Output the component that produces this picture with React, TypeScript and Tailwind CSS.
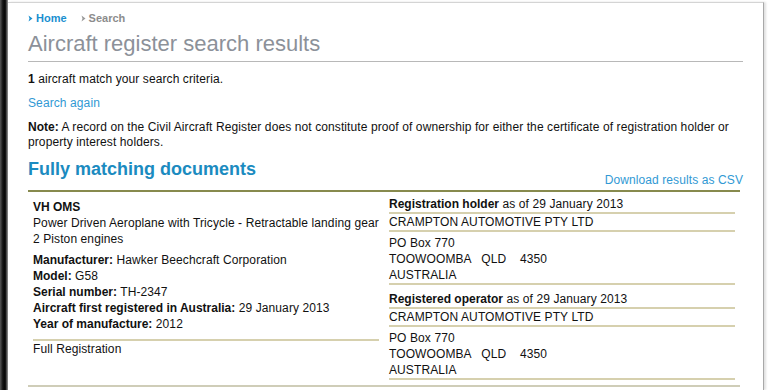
import React from 'react';

const Chevron: React.FC<{ color: string }> = ({ color }) => (
  <svg width="5" height="7" viewBox="0 0 5 7" className="inline-block mr-[3px] mb-[1px]">
    <path d="M0.5 0.5 L4.5 3.5 L0.5 6.5 L1.5 3.5 Z" fill={color} />
  </svg>
);

const B: React.FC<{ children: React.ReactNode }> = ({ children }) => (
  <span className="font-bold tracking-normal">{children}</span>
);

const AddressBlock: React.FC<{ label: string; first?: boolean }> = ({ label, first }) => (
  <div className={first ? '' : 'mt-[6px]'}>
    <div className="leading-[16px]">
      <B>{label}</B> <span>as of 29 January 2013</span>
    </div>
    <div className="h-[2px] bg-[#d6d0ae]"></div>
    <div className="leading-[16px]">CRAMPTON AUTOMOTIVE PTY LTD</div>
    <div className="h-[2px] bg-[#d6d0ae]"></div>
    <div className="pt-[3px] leading-[16px]">
      <div>PO Box 770</div>
      <div className="whitespace-pre">TOOWOOMBA   QLD    4350</div>
      <div>AUSTRALIA</div>
    </div>
    <div className="h-[2px] bg-[#d6d0ae]"></div>
  </div>
);

const App: React.FC = () => {
  const details = [
    { label: 'Manufacturer:', value: 'Hawker Beechcraft Corporation' },
    { label: 'Model:', value: 'G58' },
    { label: 'Serial number:', value: 'TH-2347' },
    { label: 'Aircraft first registered in Australia:', value: '29 January 2013' },
    { label: 'Year of manufacture:', value: '2012' },
  ];

  return (
    <div className="w-[768px] h-[390px] overflow-hidden bg-white flex text-[12px] tracking-[0.1px] text-[#111] font-['Liberation_Sans',Arial,sans-serif]">
      {/* dark edge on the left */}
      <div className="w-[8px] h-full bg-[linear-gradient(to_right,#5a5a5a,#161616_35%,#050505_65%,#9a9a9a)]"></div>

      <div className="w-[756px] mt-[2px] border-t border-r border-[#d4d4d4] border-r-[#a8a8a8] shadow-[2px_0_2px_rgba(0,0,0,0.12)] pl-[20px] pt-[8px]">
        {/* breadcrumb */}
        <div className="flex items-center gap-[14px] text-[11px] font-bold leading-[14px] tracking-normal">
          <span className="text-[#1a8fd0]"><Chevron color="#1a8fd0" />Home</span>
          <span className="text-[#8c8c8c]"><Chevron color="#9a9a9a" />Search</span>
        </div>

        <div className="w-[715px]">
          <h1 className="mt-[6px] text-[22px] leading-[26px] tracking-normal text-[#8c9199] pb-[4px] border-b border-[#b8b8b8]">
            Aircraft register search results
          </h1>

          <p className="mt-[10px] leading-[15px]">
            <B>1</B> <span>aircraft match your search criteria.</span>
          </p>
          <p className="mt-[9px] leading-[15px] text-[#3199d4]">Search again</p>
          <p className="mt-[9px] leading-[15px]">
            <B>Note:</B> <span>A record on the Civil Aircraft Register does not constitute proof of ownership for either the certificate of registration holder or property interest holders.</span>
          </p>

          <div className="flex items-end justify-between mt-[8px]">
            <h2 className="text-[18px] font-bold leading-[22px] tracking-normal pb-[10px] text-[#1b8bc0]">Fully matching documents</h2>
            <span className="leading-[15px] pb-[2px] text-[#3199d4]">Download results as CSV</span>
          </div>

          <div className="w-[712px] border-t-2 border-[#878a4e] border-b-2 border-b-[#cfcdb8] flex">
            {/* left cell */}
            <div className="w-[356px] px-[5px] pt-[7px] leading-[16px]">
              <div className="font-bold tracking-normal">VH OMS</div>
              <div>Power Driven Aeroplane with Tricycle - Retractable landing gear</div>
              <div>2 Piston engines</div>
              <div className="mt-[5px]">
                {details.map((d) => (
                  <div key={d.label}>
                    <B>{d.label}</B> <span>{d.value}</span>
                  </div>
                ))}
              </div>
              <div className="mt-[7px] h-[2px] bg-[#d6d0ae]"></div>
              <div>Full Registration</div>
            </div>

            {/* right cell */}
            <div className="w-[356px] px-[5px] pt-[4px] pb-[5px]">
              <AddressBlock label="Registration holder" first />
              <AddressBlock label="Registered operator" />
            </div>
          </div>
        </div>
      </div>
    </div>
  );
};

export default App;
